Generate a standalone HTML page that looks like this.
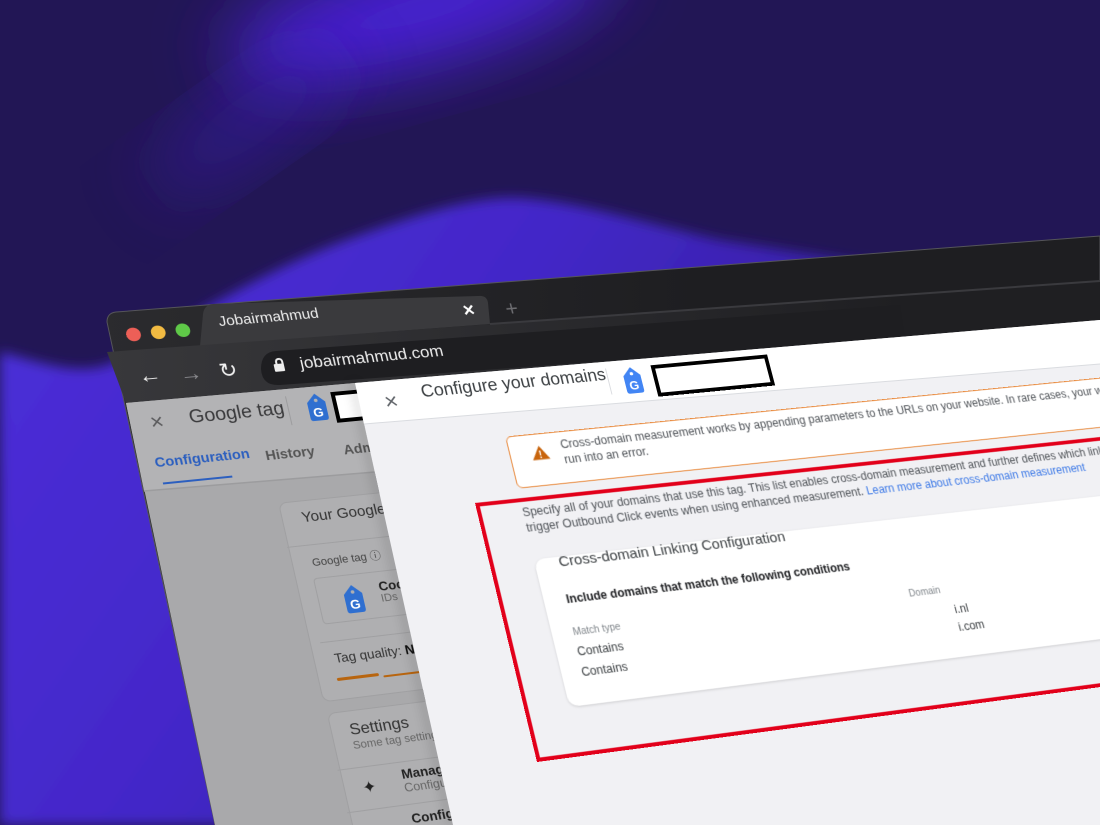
<!DOCTYPE html>
<html><head><meta charset="utf-8">
<style>
html,body{margin:0;padding:0;width:1100px;height:825px;overflow:hidden;background:#221655;font-family:"Liberation Sans",Arial,sans-serif;}
#wrap{position:relative;width:1100px;height:825px;overflow:hidden;}
.svgl{position:absolute;left:0;top:0}
.plane{position:absolute;left:0;top:0;width:680px;height:266px;transform-origin:0 0;}
.plane>*{position:absolute;white-space:nowrap;line-height:1;box-sizing:border-box;}
.gi{width:24px;height:30px}
</style></head><body><div id="wrap">
<svg class="svgl" width="1100" height="825" viewBox="0 0 1100 825">
<defs>
<filter id="bl" x="-50%" y="-50%" width="200%" height="200%"><feGaussianBlur stdDeviation="35"/></filter>
<filter id="bl2" x="-20%" y="-20%" width="140%" height="140%"><feGaussianBlur stdDeviation="6"/></filter>
<linearGradient id="wave" x1="0" y1="0" x2="1" y2="0.4"><stop offset="0" stop-color="#4b2fda"/><stop offset="0.45" stop-color="#4327c8"/><stop offset="1" stop-color="#2c1b85"/></linearGradient>
<linearGradient id="tb" x1="100" y1="0" x2="900" y2="0" gradientUnits="userSpaceOnUse"><stop offset="0" stop-color="#38383b"/><stop offset="1" stop-color="#1f1f22"/></linearGradient>
<linearGradient id="win" x1="100" y1="0" x2="700" y2="0" gradientUnits="userSpaceOnUse"><stop offset="0" stop-color="#2b2b2e"/><stop offset="1" stop-color="#1e1e21"/></linearGradient>
</defs>
<rect width="1100" height="825" fill="#221655"/>
<ellipse cx="420" cy="10" rx="200" ry="55" fill="#4a22d6" filter="url(#bl)" transform="rotate(-15 420 10)"/>
<ellipse cx="250" cy="120" rx="120" ry="30" fill="#3a1db0" opacity=".6" filter="url(#bl)" transform="rotate(-35 250 120)"/>
<path d="M0,352 C40,362 80,378 115,362 C170,330 260,270 360,235 C430,210 480,196 520,198 C580,202 640,222 720,240 L1100,300 L1100,825 L0,825 Z" fill="url(#wave)" filter="url(#bl2)"/>
<path d="M107,322 Q107,313 116,312 L1100,236 L1100,825 L215,825 Z" fill="url(#win)" stroke="#55555a" stroke-width="1"/>
<path d="M200,346 L203,314 Q204,305 213,304 L478,296 Q487,295 488,303 L490,324 Z" fill="#3a3a3d"/>
<path d="M107,352 L1100,280 L1100,320 L126,403 Z" fill="url(#tb)"/>
<path d="M490,324 L1100,281" stroke="#3a3a3e" stroke-width="2"/>
<path d="M276,351 L900,305 L905,339 L280,385 Q262,386 261,369 Q261,352 276,351 Z" fill="#1e1e21"/>
<path d="M126,403 L355,383 L453,825 L215,825 Z" fill="#a9a9ab"/>
<path d="M126,403 L355,383 L375,472 L144,491 Z" fill="#b3b3b5"/>
<path d="M144,491 L375,472" stroke="#9c9c9e" stroke-width="1.5"/>
</svg>

<div class="plane">
<div at="125,328" style="width:14px;height:14px;border-radius:50%;background:#ed5f57"></div>
<div at="150,326" style="width:14px;height:14px;border-radius:50%;background:#f2bb42"></div>
<div at="174,324" style="width:14px;height:14px;border-radius:50%;background:#5fc948"></div>
<div at="217,315" style="font-size:15px;color:#ececec">Jobairmahmud</div>
<div at="461,302" style="font-size:20px;color:#fff;font-weight:bold">×</div>
<div at="503,299" style="font-size:22px;color:#6c6c70">+</div>
<div at="136,366" style="font-size:22px;color:#f2f2f2">←</div>
<div at="177,364" style="font-size:22px;color:#8a8a8e">→</div>
<div at="217,361" style="font-size:21px;color:#f2f2f2">↻</div>
<div at="273,364" style="width:10px;height:8px;background:#eee;border-radius:1px"></div>
<div at="274,358" style="width:8px;height:8px;border:2px solid #eee;border-bottom:none;border-radius:4px 4px 0 0"></div>
<div at="298,355" style="font-size:17px;color:#ececec">jobairmahmud.com</div>

<div at="148,412" style="font-size:22px;color:#5a5a5c">×</div>
<div at="187,408" style="font-size:19px;color:#3a3a3c">Google tag</div>
<div box="285,396,286,426,287,396,1" style="border-left:1px solid #9c9c9e"></div>
<div at="302,393"><svg class="gi" viewBox="0 0 24 30"><path d="M3,11 L12,2 L21,11 L21,27 Q21,30 18,30 L6,30 Q3,30 3,27 Z" fill="#2f6fd0"/><circle cx="12" cy="9" r="1.8" fill="#b3b3b5"/><text x="12" y="26" font-size="13" font-weight="bold" fill="#fff" text-anchor="middle" font-family="Liberation Sans">G</text></svg></div>
<div box="330,392,334,423,362,390,0" style="border:4px solid #000;background:#fff"></div>
<div at="153,455" style="font-size:14px;color:#2c5fbf;font-weight:bold">Configuration</div>
<div box="163,482,163,485,233,478,0" style="background:#2c5fbf"></div>
<div at="264,449" style="font-size:14px;color:#555;font-weight:bold">History</div>
<div at="342,443" style="font-size:14px;color:#555;font-weight:bold">Admin</div>
<div box="278,503,322,702,420,493,60" style="background:#afafb1;border:1px solid #a0a0a2;border-radius:8px"></div>
<div box="287,547,287,548,420,537,60" style="background:#a0a0a2"></div>
<div at="300,510" style="font-size:15px;color:#333">Your Google tag</div>
<div at="311,558" style="font-size:11px;color:#444">Google tag ⓘ</div>
<div box="313,578,322,625,420,570,40" style="border:1px solid #a0a0a2;border-radius:4px"></div>
<div at="338,585"><svg class="gi" viewBox="0 0 24 30"><path d="M3,11 L12,2 L21,11 L21,27 Q21,30 18,30 L6,30 Q3,30 3,27 Z" fill="#2f6fd0"/><circle cx="12" cy="9" r="1.8" fill="#afafb1"/><text x="12" y="26" font-size="13" font-weight="bold" fill="#fff" text-anchor="middle" font-family="Liberation Sans">G</text></svg></div>
<div at="377,580" style="font-size:13px;color:#222;font-weight:bold">Cocoon</div>
<div at="380,594" style="font-size:11px;color:#666">IDs</div>
<div box="320,642,320,643,420,634,60" style="background:#a0a0a2"></div>
<div at="333,652" style="font-size:13px;color:#333">Tag quality: <b style="color:#111">Need</b></div>
<div box="337,678,337,681,379,675,0" style="background:#b8650f;border-radius:2px"></div>
<div box="383,675,383,678,421,672,0" style="background:#b8650f;border-radius:2px"></div>
<div box="327,713,352,840,440,705,60" style="background:#afafb1;border:1px solid #a0a0a2;border-radius:8px"></div>
<div at="348,723" style="font-size:16px;color:#333">Settings</div>
<div at="352,741" style="font-size:11px;color:#666">Some tag settings</div>
<div box="337,770,337,771,440,762,60" style="background:#a0a0a2"></div>
<div at="361,781" style="font-size:16px;color:#222">✦</div>
<div at="400,768" style="font-size:13px;color:#222;font-weight:bold">Manage</div>
<div at="403,782" style="font-size:12px;color:#666">Configure</div>
<div box="347,812,347,813,440,805,60" style="background:#a0a0a2"></div>
<div at="410,812" style="font-size:13px;color:#222;font-weight:bold">Configure</div>
</div>

<svg class="svgl" width="1100" height="825" viewBox="0 0 1100 825">
<defs><filter id="bl3" x="-20%" y="-20%" width="140%" height="140%"><feGaussianBlur stdDeviation="5"/></filter></defs>
<path d="M353,383 L451,825" stroke="#000" stroke-opacity=".15" stroke-width="6" filter="url(#bl3)"/>
<path d="M355,383 L1100,320 L1100,825 L453,825 Z" fill="#f1f1f4"/>
<path d="M355,383 L1100,320 L1100,364 L364,424 Z" fill="#ffffff"/>
<path d="M364,424 L1100,364" stroke="#dadce0" stroke-width="1"/>
</svg>

<div class="plane">
<div at="382,391" style="font-size:23px;color:#5f6368">×</div>
<div at="419,383" style="font-size:18px;color:#3c4043">Configure your domains</div>
<div box="605,369,606,395,607,369,1" style="border-left:1px solid #dadce0"></div>
<div at="618,366"><svg class="gi" viewBox="0 0 24 30"><path d="M3,11 L12,2 L21,11 L21,27 Q21,30 18,30 L6,30 Q3,30 3,27 Z" fill="#4285f4"/><circle cx="12" cy="9" r="1.8" fill="#fff"/><text x="12" y="26" font-size="13" font-weight="bold" fill="#fff" text-anchor="middle" font-family="Liberation Sans">G</text></svg></div>
<div box="650,365,653,397,768,357,0" style="border:4px solid #000;background:#fff"></div>
<div box="505,437,511,489,1100,383,300" style="background:#fff;border:1px solid #e8883a;border-radius:6px"></div>
<div at="529,446"><svg width="19" height="16" viewBox="0 0 19 16"><path d="M9.5,1 L18.5,15.5 L0.5,15.5 Z" fill="#c8640c"/><text x="9.5" y="14" font-size="10" font-weight="bold" fill="#fff" text-anchor="middle" font-family="Liberation Sans">!</text></svg></div>
<div at="559,439" style="font-size:12px;color:#4f5358">Cross-domain measurement works by appending parameters to the URLs on your website. In rare cases, your website may</div>
<div at="563,454" style="font-size:12px;color:#4f5358">run into an error.</div>
<div box="475,503,537,762,1100,437,300" style="border:4px solid #e2001a"></div>
<div at="521,507" style="font-size:12px;color:#4f5358">Specify all of your domains that use this tag. This list enables cross-domain measurement and further defines which links</div>
<div at="525,522" style="font-size:12px;color:#4f5358">trigger Outbound Click events when using enhanced measurement. <span style="color:#3b78e7">Learn more about cross-domain measurement</span></div>
<div box="534,560,559,708,1100,500,300" style="background:#fff;border-radius:10px;box-shadow:0 1px 3px rgba(0,0,0,.15)"></div>
<div at="557,555" style="font-size:15px;color:#3c4043">Cross-domain Linking Configuration</div>
<div at="565,594" style="font-size:12px;color:#202124;font-weight:bold">Include domains that match the following conditions</div>
<div at="908,590" style="font-size:10px;color:#80868b">Domain</div>
<div at="953,604" style="font-size:12px;color:#3c4043">i.nl</div>
<div at="957,622" style="font-size:12px;color:#3c4043">i.com</div>
<div at="572,628" style="font-size:10px;color:#80868b">Match type</div>
<div at="576,646" style="font-size:12px;color:#3c4043">Contains</div>
<div at="580,666" style="font-size:12px;color:#3c4043">Contains</div>
</div>
</div>

<script>
(function(){
var W=680,H=266;
var q=[[475,503],[1100,437],[1168,678],[537,762]];
var x0=q[0][0],y0=q[0][1],x1=q[1][0],y1=q[1][1],x2=q[2][0],y2=q[2][1],x3=q[3][0],y3=q[3][1];
var sx=x0-x1+x2-x3,sy=y0-y1+y2-y3;
var dx1=x1-x2,dx2=x3-x2,dy1=y1-y2,dy2=y3-y2;
var den=dx1*dy2-dx2*dy1;
var g=(sx*dy2-dx2*sy)/den,h=(dx1*sy-sx*dy1)/den;
var a=x1-x0+g*x1,b=x3-x0+h*x3,c=x0,d=y1-y0+g*y1,e=y3-y0+h*y3,f=y0;
var A=a/W,B=b/H,G=g/W,Hh=h/H,D=d/W,E=e/H;
function inv(X,Y){
 var m11=A-G*X,m12=B-Hh*X,r1=X-c,m21=D-G*Y,m22=E-Hh*Y,r2=Y-f;
 var dt=m11*m22-m12*m21;
 return [(r1*m22-m12*r2)/dt,(m11*r2-r1*m21)/dt];
}
var planes=document.querySelectorAll('.plane');
for(var k=0;k<planes.length;k++){
 var p=planes[k];
 p.style.transform='matrix3d('+[A,D,0,G,B,E,0,Hh,0,0,1,0,c,f,0,1].join(',')+')';
 var els=p.children;
 for(var i=0;i<els.length;i++){
  var el=els[i],at=el.getAttribute('at'),bx=el.getAttribute('box');
  if(at){var s=at.split(',').map(Number);var l=inv(s[0],s[1]);el.style.left=l[0]+'px';el.style.top=l[1]+'px';}
  else if(bx){var s=bx.split(',').map(Number);var tl=inv(s[0],s[1]),bl=inv(s[2],s[3]),tr=inv(s[4],s[5]);
   el.style.left=tl[0]+'px';el.style.top=tl[1]+'px';el.style.height=Math.max(1,bl[1]-tl[1])+'px';el.style.width=Math.max(1,tr[0]-tl[0]+s[6])+'px';}
 }
}
})();
</script>
</body></html>
